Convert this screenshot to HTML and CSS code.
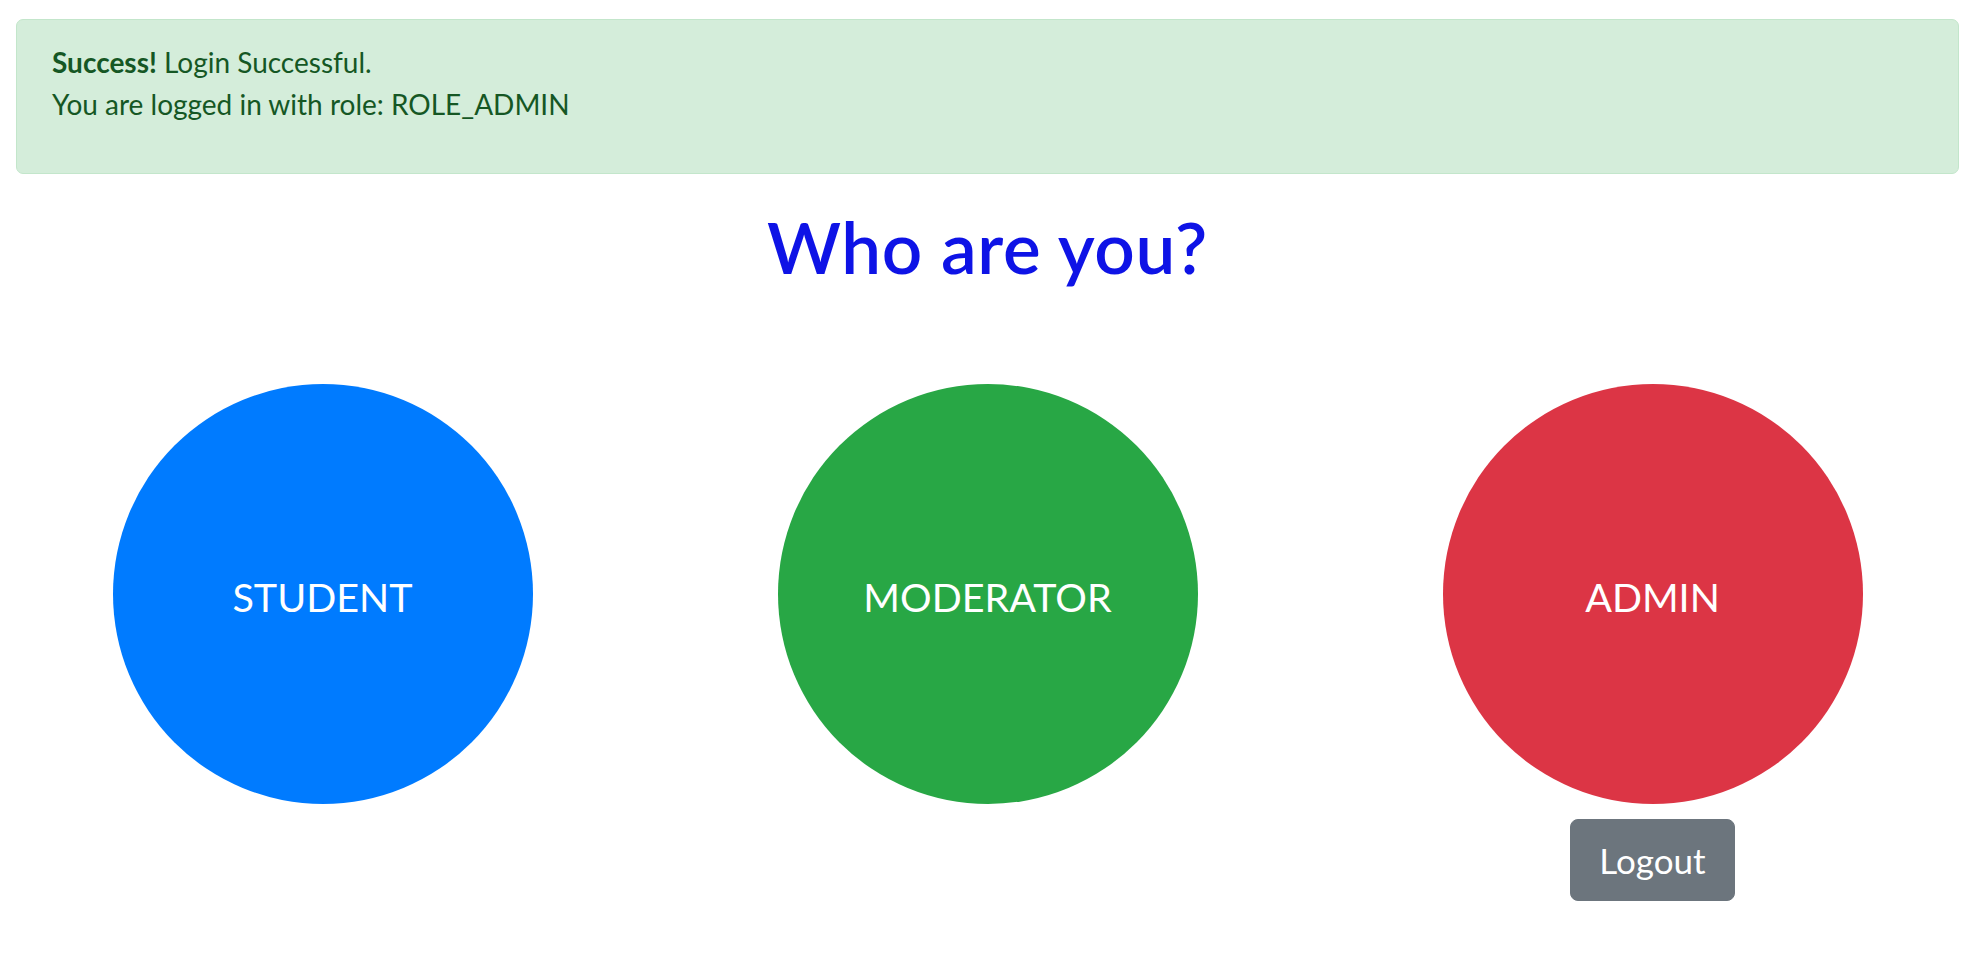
FILE: index.html
```html
<!DOCTYPE html>
<html lang="en">
<head>
<meta charset="utf-8">
<title>Who are you?</title>
<link rel="stylesheet" href="styles.css">
</head>
<body>
<div class="page">
  <div class="alert">
    <div class="alert-line"><strong>Success!</strong> Login Successful.</div>
    <p class="alert-role">You are logged in with role: ROLE_ADMIN</p>
  </div>
  <h1 class="title">Who are you?</h1>
  <div class="roles">
    <div class="role-col">
      <div class="circle circle-student">STUDENT</div>
    </div>
    <div class="role-col">
      <div class="circle circle-moderator">MODERATOR</div>
    </div>
    <div class="role-col">
      <div class="circle circle-admin">ADMIN</div>
      <button class="btn-logout" type="button">Logout</button>
    </div>
  </div>
</div>
</body>
</html>
```
FILE: styles.css
```css
* { box-sizing: border-box; }
html, body { margin: 0; padding: 0; background: #ffffff; }
body {
  font-family: Lato, "Noto Sans", "Liberation Sans", sans-serif;
  color: #212529;
}
.page {
  padding: 19px 16px 0 16px;
}
.alert {
  background: #d4edda;
  border: 1.75px solid #c3e6cb;
  border-radius: 7px;
  color: #155724;
  padding: 21px 35px 0 35px;
  height: 155px;
  font-size: 28px;
  line-height: 42px;
}
.alert-line strong { font-weight: 700; }
.alert-role { margin: 0; }
.title {
  margin: 31px 0 0 0;
  text-align: center;
  font-size: 71px;
  letter-spacing: 0.6px;
  line-height: 84px;
  font-weight: 600;
  color: #0e13e6;
}
.roles {
  display: flex;
  justify-content: center;
  align-items: flex-start;
  gap: 245px;
  margin-top: 95px;
}
.role-col {
  display: flex;
  flex-direction: column;
  align-items: center;
}
.circle {
  width: 420px;
  height: 420px;
  border-radius: 50%;
  display: flex;
  align-items: center;
  justify-content: center;
  padding-top: 5px;
  color: #ffffff;
  font-size: 39.5px;
}
.circle-student { background: #007bff; }
.circle-moderator { background: #28a745; }
.circle-admin { background: #dc3545; }
.btn-logout {
  margin-top: 15px;
  background: #6c757d;
  color: #ffffff;
  border: 1.75px solid #6c757d;
  border-radius: 8px;
  font-family: inherit;
  font-size: 35px;
  line-height: 52px;
  padding: 14px 28px;
  cursor: pointer;
}
```
